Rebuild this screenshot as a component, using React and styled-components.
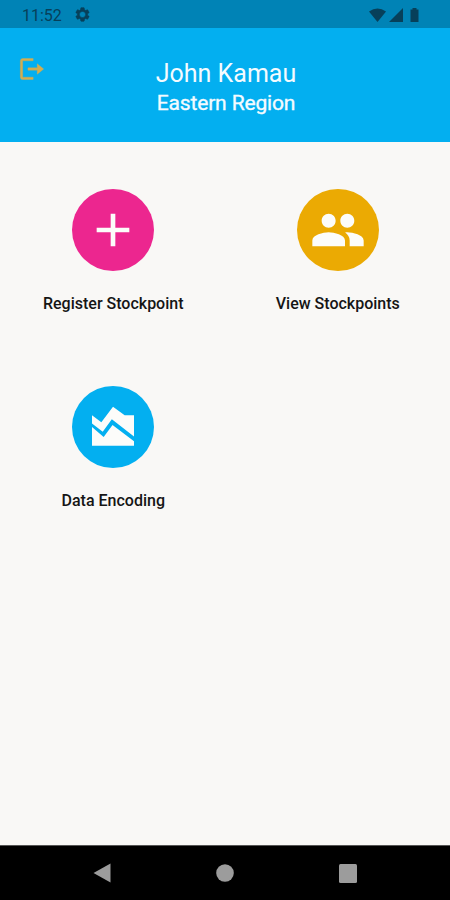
import React from 'react'
import styled, { createGlobalStyle } from 'styled-components'

const GlobalStyle = createGlobalStyle`
  * {
    box-sizing: border-box;
  }

  body {
    margin: 0;
    font-family: Roboto, sans-serif;
  }
`

const Screen = styled.div`
  background-color: #f9f8f6;
  display: flex;
  flex-direction: column;
  height: 900px;
  overflow: hidden;
  width: 450px;
`

const StatusBar = styled.div`
  align-items: center;
  background-color: #0083b6;
  color: #07405a;
  display: flex;
  flex-shrink: 0;
  height: 28px;
  padding: 1px 29px 0 22px;
`

const Clock = styled.span`
  font-size: 16px;
  line-height: 26px;
  margin-right: 12px;
  padding-top: 2px;
`

const StatusIcons = styled.div`
  align-items: center;
  display: flex;
  gap: 2.5px;
  margin-left: auto;
`

const Header = styled.header`
  align-items: flex-start;
  background-color: #03aff0;
  color: #f4fbff;
  display: grid;
  flex-shrink: 0;
  grid-template-columns: 65px 1fr 63px;
  height: 114px;
  padding-top: 27px;
`

const LogoutButton = styled.button`
  background: none;
  border: 0;
  color: #d3ad50;
  display: flex;
  padding: 0 0 0 18px;
`

const Heading = styled.div`
  padding-top: 3px;
  text-align: center;
`

const Name = styled.h1`
  font-size: 25px;
  font-weight: 400;
  line-height: 32px;
  margin: 0;
`

const Region = styled.p`
  font-size: 21px;
  letter-spacing: -0.15px;
  line-height: 27px;
  margin: 0;
  -webkit-text-stroke: 0.35px currentColor;
`

const Menu = styled.main`
  align-content: start;
  display: grid;
  flex: 1;
  grid-auto-rows: 197px;
  grid-template-columns: 1fr 1fr;
  padding: 47px 0 0 1px;
`

const MenuItem = styled.div`
  align-items: center;
  display: flex;
  flex-direction: column;
`

const Circle = styled.div`
  align-items: center;
  background-color: ${({ color }) => color};
  border-radius: 50%;
  color: #fcfcfa;
  display: flex;
  height: 82px;
  justify-content: center;
  width: 82px;
`

const Label = styled.span`
  color: #151515;
  font-size: 16px;
  font-weight: 500;
  line-height: 20px;
  margin-top: 23px;
`

const NavBar = styled.nav`
  align-items: center;
  background-color: #000;
  border-top: 1px solid #555;
  color: #9c9c9c;
  display: flex;
  flex-shrink: 0;
  height: 55px;
  justify-content: space-between;
  padding: 0 93px 0 93px;
`

const Icon = ({ path, size, stroke = 0 }) => (
  <svg
    width={size}
    height={size}
    viewBox="0 0 24 24"
    fill="currentColor"
    stroke="currentColor"
    strokeWidth={stroke}
  >
    <path d={path} />
  </svg>
)

const icons = {
  settings: 'M19.14 12.94c.04-.3.06-.61.06-.94 0-.32-.02-.64-.07-.94l2.03-1.58a.49.49 0 0 0 .12-.61l-1.92-3.32a.49.49 0 0 0-.59-.22l-2.39.96a7 7 0 0 0-1.62-.94l-.36-2.54A.48.48 0 0 0 13.92 2.4h-3.84a.48.48 0 0 0-.48.41l-.36 2.54c-.59.24-1.13.57-1.62.94l-2.39-.96a.48.48 0 0 0-.59.22L2.72 8.87a.48.48 0 0 0 .12.61l2.03 1.58c-.05.3-.07.63-.07.94s.02.64.07.94l-2.03 1.58a.49.49 0 0 0-.12.61l1.92 3.32c.12.22.37.29.59.22l2.39-.96c.5.38 1.03.7 1.62.94l.36 2.54c.05.24.24.41.48.41h3.84c.24 0 .44-.17.48-.41l.36-2.54a7 7 0 0 0 1.62-.94l2.39.96c.22.08.47 0 .59-.22l1.92-3.32a.48.48 0 0 0-.12-.61zM12 16.4a4.4 4.4 0 1 1 0-8.8 4.4 4.4 0 0 1 0 8.8z',
  logout: 'M16.5 7.5V11H8.5v2h8v3.5L22 12zM4 5h9V3H4c-1.1 0-2 .9-2 2v14c0 1.1.9 2 2 2h9v-2H4z',
  add: 'M19 13h-6v6h-2v-6H5v-2h6V5h2v6h6z',
  people: 'M16 11c1.66 0 2.99-1.34 2.99-3S17.66 5 16 5s-3 1.34-3 3 1.34 3 3 3zm-8 0c1.66 0 2.99-1.34 2.99-3S9.66 5 8 5 5 6.34 5 8s1.34 3 3 3zm0 2c-2.33 0-7 1.17-7 3.5V19h14v-2.5c0-2.33-4.67-3.5-7-3.5zm8 0c-.29 0-.62.02-.97.05 1.16.84 1.97 1.97 1.97 3.45V19h6v-2.5c0-2.33-4.67-3.5-7-3.5z',
  chart: 'M3 12v8h18v-1.9l-9.2-7L8 16.3zM3 7l4 3 5-6.7L17 7h4v9.1l-9.5-7.4L7.6 14 3 10.5z',
}

const items = [
  { label: 'Register Stockpoint', icon: 'add', color: '#ec268f' },
  { label: 'View Stockpoints', icon: 'people', color: '#ebaa03' },
  { label: 'Data Encoding', icon: 'chart', color: '#03aff0' },
]

const App = () => (
  <React.Fragment>
    <GlobalStyle />
    <Screen>
      <StatusBar>
        <Clock>11:52</Clock>
        <Icon path={icons.settings} size={17} stroke={0.8} />
        <StatusIcons>
          <svg width="17" height="14" viewBox="0 0 17 14" fill="currentColor">
            <path d="M0 3.5Q8.5-2.5 17 3.5L8.5 14z" />
          </svg>
          <svg width="14" height="14" viewBox="0 0 14 14" fill="currentColor">
            <path d="M14 0v14H0z" />
          </svg>
          <svg width="16" height="14" viewBox="0 0 16 14" fill="currentColor">
            <path d="M5.5 1.5h2V0h4v1.5h2V14h-8z" />
          </svg>
        </StatusIcons>
      </StatusBar>
      <Header>
        <LogoutButton aria-label="Logout">
          <Icon path={icons.logout} size={28} stroke={0.3} />
        </LogoutButton>
        <Heading>
          <Name>John Kamau</Name>
          <Region>Eastern Region</Region>
        </Heading>
      </Header>
      <Menu>
        {items.map(({ label, icon, color }) => (
          <MenuItem key={label}>
            <Circle color={color}>
              <Icon path={icons[icon]} size={56} />
            </Circle>
            <Label>{label}</Label>
          </MenuItem>
        ))}
      </Menu>
      <NavBar>
        <svg width="18" height="20" viewBox="0 0 18 20" fill="currentColor">
          <path d="M17.5.5v19L.5 10z" />
        </svg>
        <svg width="18" height="18" viewBox="0 0 18 18" fill="currentColor">
          <circle cx="9" cy="9" r="8.8" />
        </svg>
        <svg width="18" height="19" viewBox="0 0 18 19" fill="currentColor">
          <rect width="18" height="19" rx="1.5" />
        </svg>
      </NavBar>
    </Screen>
  </React.Fragment>
)

export default App
